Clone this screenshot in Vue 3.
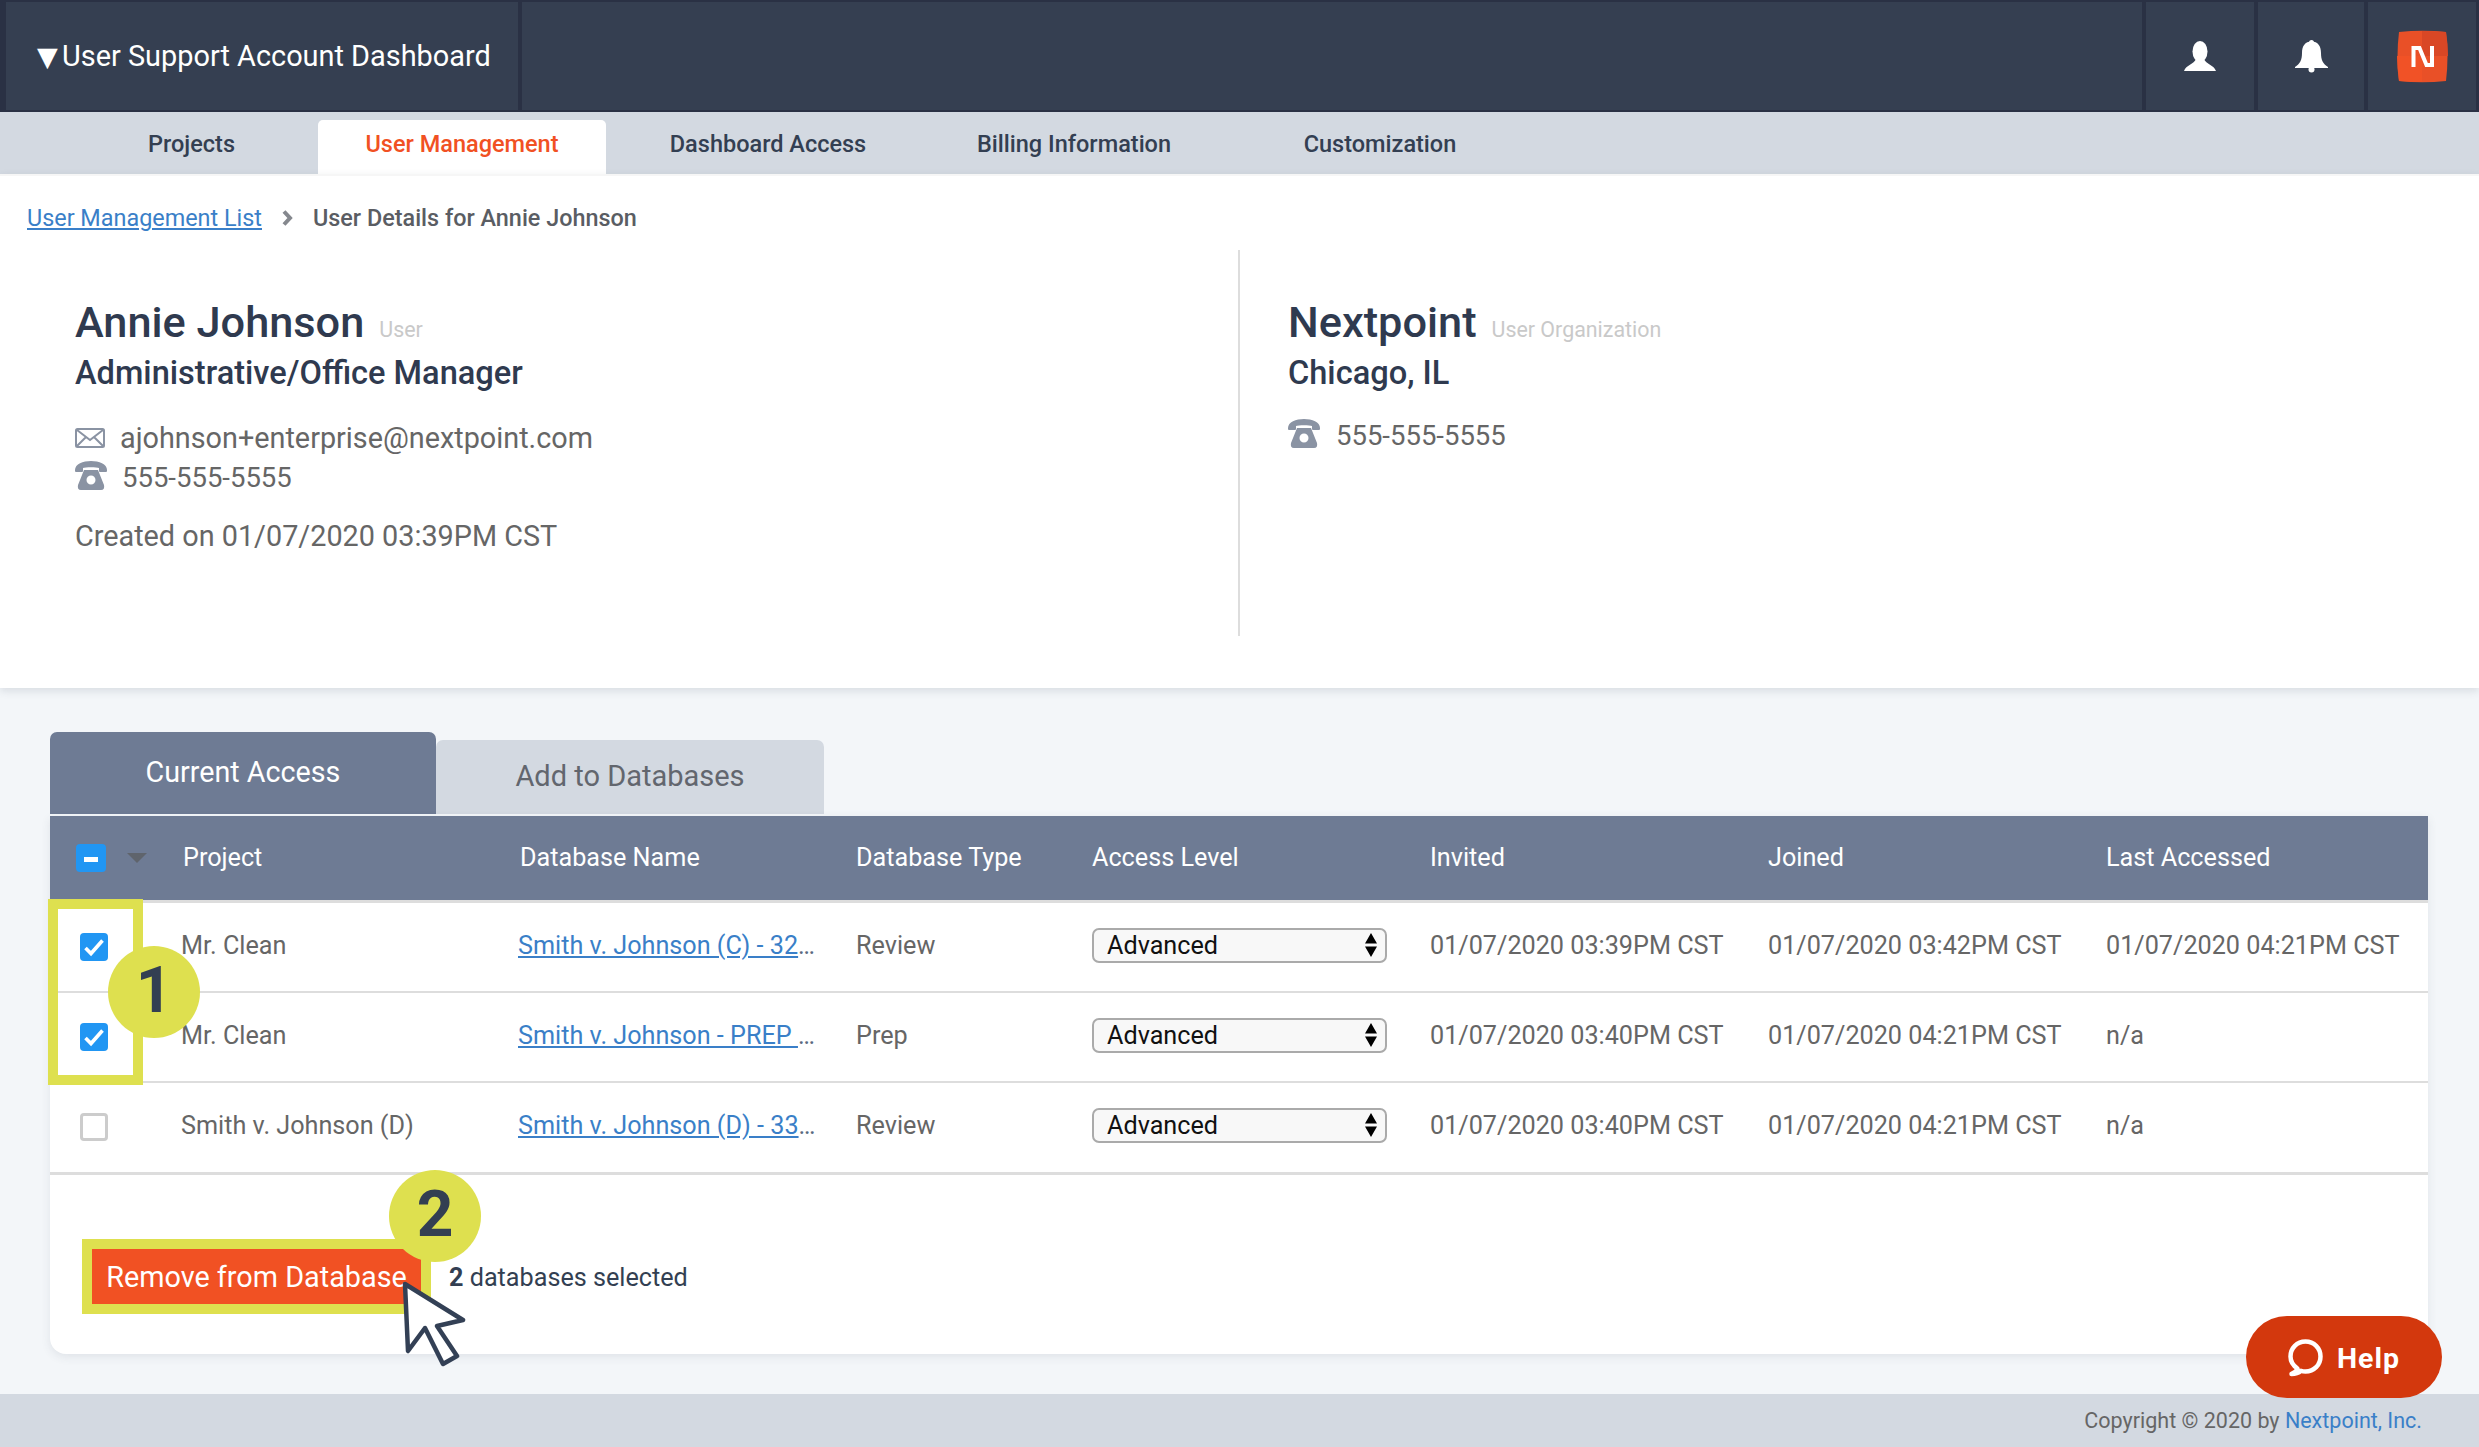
<template>
  <div class="page">
    <header class="topbar">
      <div class="topbar-title"><span class="caret">▼</span>User Support Account Dashboard</div>
      <div class="topbar-spacer"></div>
      <button class="topbar-btn">
        <svg width="32" height="30" viewBox="0 0 32 30" fill="#fff">
          <ellipse cx="16" cy="10.500" rx="7.500" ry="10.500" />
          <path d="M0 30C2 24 10 23 12 18h8c2 5 10 6 12 12z" />
        </svg>
      </button>
      <button class="topbar-btn bell-btn">
        <svg width="33" height="33" viewBox="0 0 33 33" fill="#fff">
          <circle cx="16.500" cy="2.500" r="2.500" />
          <path d="M16.500 1.500C23 1.500 26 6 26 13c0 7 2 11 7 14v1H0v-1c5-3 7-7 7-14C7 6 10 1.500 16.500 1.500z" />
          <circle cx="16.500" cy="29.500" r="3" />
        </svg>
      </button>
      <button class="topbar-btn">
        <svg width="53" height="53" viewBox="0 0 53 53">
          <path d="M3 2Q26.500-.5 50 2Q53 26.500 50 51Q26.500 53.500 3 51Q0 26.500 3 2z" fill="#e95027" />
          <path d="M26 1Q38 1 50 2Q52 14 52 26H26z" fill="#d94725" />
          <path d="M1 26H26V52Q14 52 3 51Q1 38 1 26z" fill="#f15226" />
          <path d="M17.500 37V18H23.500L30.500 35H36V16" fill="none" stroke="#fff" stroke-width="4" />
        </svg>
      </button>
    </header>

    <nav class="mainnav">
      <a
        v-for="tab in navTabs"
        :key="tab.label"
        class="nav-cell"
        :class="{ narrow: tab.narrow }"
      >
        <span class="nav-label" :class="{ active: tab.active }">{{ tab.label }}</span>
      </a>
    </nav>

    <section class="details">
      <div class="breadcrumb">
        <a class="link">User Management List</a>
        <svg width="11" height="16" viewBox="0 0 11 16" class="crumb-arrow">
          <path d="M2 1.500L8 8L2 14.500" fill="none" stroke="#85888e" stroke-width="4" />
        </svg>
        <span class="crumb-current">User Details for Annie Johnson</span>
      </div>

      <div class="detail-cols">
        <div class="detail-col user-col">
          <div class="name-row">
            <h1 class="name">Annie Johnson</h1>
            <span class="name-tag">User</span>
          </div>
          <h2 class="subtitle">Administrative/Office Manager</h2>
          <div class="email-row">
            <svg width="30" height="20" viewBox="0 0 30 20" fill="none" stroke="#8a93a3" stroke-width="2">
              <rect x="1" y="1" width="28" height="18" rx="1.500" />
              <path d="M2 2L15 12L28 2M2 18L11 9M28 18L19 9" />
            </svg>
            <span>ajohnson+enterprise@nextpoint.com</span>
          </div>
          <div class="phone-row">
            <svg class="phone-icon" width="32" height="29" viewBox="0 0 32 29" fill="#8a93a3" fill-rule="evenodd">
              <path d="M0 9C0 3 8 0 16 0s16 3 16 9v1q0 1-1 1h-6q-1 0-1-1V7C22 6 10 6 8 7v3q0 1-1 1H1q-1 0-1-1z" />
              <path d="M9 9h14l6 15q1 5-3 5H6q-4 0-3-5zM16 14.500a4.500 4.500 0 1 0 0 9a4.500 4.500 0 1 0 0-9z" />
            </svg>
            <span>555-555-5555</span>
          </div>
          <p class="created">Created on 01/07/2020 03:39PM CST</p>
        </div>

        <div class="detail-col org-col">
          <div class="name-row">
            <h1 class="name">Nextpoint</h1>
            <span class="name-tag">User Organization</span>
          </div>
          <h2 class="subtitle">Chicago, IL</h2>
          <div class="phone-row org-phone">
            <svg class="phone-icon" width="32" height="29" viewBox="0 0 32 29" fill="#8a93a3" fill-rule="evenodd">
              <path d="M0 9C0 3 8 0 16 0s16 3 16 9v1q0 1-1 1h-6q-1 0-1-1V7C22 6 10 6 8 7v3q0 1-1 1H1q-1 0-1-1z" />
              <path d="M9 9h14l6 15q1 5-3 5H6q-4 0-3-5zM16 14.500a4.500 4.500 0 1 0 0 9a4.500 4.500 0 1 0 0-9z" />
            </svg>
            <span>555-555-5555</span>
          </div>
        </div>
      </div>
    </section>

    <div class="access-tabs">
      <div class="access-tab current">Current Access</div>
      <div class="access-tab other">Add to Databases</div>
    </div>

    <section class="card">
      <div class="table-row table-head">
        <div class="head-check">
          <span class="checkbox minus"><i></i></span>
          <span class="head-caret"></span>
        </div>
        <div v-for="col in columns" :key="col">{{ col }}</div>
      </div>

      <div v-for="row in rows" :key="row.name" class="table-row body-row">
        <div class="check-cell">
          <span class="checkbox" :class="row.checked ? 'on' : 'off'">
            <svg v-if="row.checked" width="28" height="28" viewBox="0 0 28 28">
              <path d="M5.500 15L11 20.500L22.500 7.500" fill="none" stroke="#fff" stroke-width="3.600" />
            </svg>
          </span>
        </div>
        <div class="cell-shift">{{ row.project }}</div>
        <div class="cell-shift"><div class="db-link"><a class="link">{{ row.name }}</a></div></div>
        <div>{{ row.type }}</div>
        <div class="select-wrap">
          <select class="access-select">
            <option>Advanced</option>
            <option>Standard</option>
          </select>
          <svg width="12" height="24" viewBox="0 0 12 24" class="select-arrows">
            <path d="M6 0L12 10.500H0zM6 24L0 13.500H12z" fill="#000" />
          </svg>
        </div>
        <div>{{ row.invited }}</div>
        <div>{{ row.joined }}</div>
        <div>{{ row.accessed }}</div>
      </div>

      <div class="card-footer">
        <button class="remove-btn">Remove from Database</button>
        <span class="selected-count"><b>2</b> databases selected</span>
      </div>

      <div class="highlight-box"></div>
      <div class="step step-one">1</div>
      <div class="step step-two">2</div>
      <svg class="cursor" width="64" height="86" viewBox="0 0 64 86">
        <path d="M3 3L61 39L35 45L55 75L41 83L23 47L6 70z" fill="#fff" stroke="#334055" stroke-width="4.500" stroke-linejoin="round" />
      </svg>
    </section>

    <footer class="footer">
      Copyright © 2020 by&nbsp;<a class="footer-link">Nextpoint, Inc.</a>
    </footer>

    <button class="help-btn">
      <svg width="36" height="38" viewBox="0 0 36 38" fill="none">
        <path d="M9.500 29.500C5 26.500 2.500 22 2.500 17.500C2.500 9 9 2.500 17.500 2.500S32.500 9 32.500 17.500S26 32.500 17.500 32.500C16 32.500 14.500 32.300 13 31.800C10.500 34 7 35 3.500 35C6.500 34 8.500 32 9.500 29.500z" stroke="#fff" stroke-width="4.500" stroke-linejoin="round" />
      </svg>
      <span>Help</span>
    </button>
  </div>
</template>

<script setup>
const navTabs = [
  { label: "Projects", narrow: true },
  { label: "User Management", active: true },
  { label: "Dashboard Access" },
  { label: "Billing Information" },
  { label: "Customization" },
]

const columns = [
  "Project",
  "Database Name",
  "Database Type",
  "Access Level",
  "Invited",
  "Joined",
  "Last Accessed",
]

const rows = [
  {
    checked: true,
    project: "Mr. Clean",
    name: "Smith v. Johnson (C) - 3214 Review",
    type: "Review",
    invited: "01/07/2020 03:39PM CST",
    joined: "01/07/2020 03:42PM CST",
    accessed: "01/07/2020 04:21PM CST",
  },
  {
    checked: true,
    project: "Mr. Clean",
    name: "Smith v. Johnson - PREP Database",
    type: "Prep",
    invited: "01/07/2020 03:40PM CST",
    joined: "01/07/2020 04:21PM CST",
    accessed: "n/a",
  },
  {
    checked: false,
    project: "Smith v. Johnson (D)",
    name: "Smith v. Johnson (D) - 3316 Review",
    type: "Review",
    invited: "01/07/2020 03:40PM CST",
    joined: "01/07/2020 04:21PM CST",
    accessed: "n/a",
  },
]
</script>

<style>
html,
body {
  margin: 0;
  background: #f3f6f9;
}
</style>

<style scoped>
.page {
  position: relative;
  display: flex;
  flex-direction: column;
  height: 1447px;
  overflow: hidden;
  font-family: Roboto, "Liberation Sans", sans-serif;
  background: #f3f6f9;
  color: #666;
}

.topbar {
  display: flex;
  height: 112px;
  box-sizing: border-box;
  background: #2a3144;
  padding: 2px 3px 2px 6px;
  gap: 4px;
}

.topbar-title {
  width: 512px;
  background: #353f51;
  display: flex;
  align-items: center;
  padding-left: 31px;
  box-sizing: border-box;
  color: #fff;
  font-size: 28.900px;
  white-space: nowrap;
}

.caret {
  width: 25px;
  font-size: 27px;
  line-height: 1;
  font-family: "DejaVu Sans", sans-serif;
}

.topbar-spacer {
  flex: 1;
  background: #353f51;
}

.topbar-btn {
  width: 108px;
  border: 0;
  padding: 0;
  background: #353f51;
  display: flex;
  align-items: center;
  justify-content: center;
}

.bell-btn {
  width: 106px;
}

.mainnav {
  display: flex;
  height: 62px;
  padding-left: 74px;
  background: #d3d9e1;
}

.nav-cell {
  width: 306px;
  display: flex;
  justify-content: center;
  align-items: flex-end;
}

.nav-cell.narrow {
  width: 235px;
}

.nav-label {
  height: 54px;
  line-height: 49px;
  padding: 0 47px;
  font-size: 23.500px;
  font-weight: 500;
  color: #333f52;
  white-space: nowrap;
  border-radius: 5px 5px 0 0;
}

.nav-label.active {
  background: #fff;
  color: #f15123;
}

.details {
  height: 514px;
  box-sizing: border-box;
  background: #fff;
  border-top: 2px solid #f6f6f6;
  box-shadow: 0 3px 8px rgba(60, 70, 90, 0.14);
  position: relative;
}

.breadcrumb {
  display: flex;
  align-items: center;
  padding: 28px 0 0 27px;
  height: 28px;
  font-size: 23.400px;
}

.link {
  color: #3a7fc8;
  text-decoration: underline;
  text-underline-offset: 2px;
}

.crumb-arrow {
  margin: 0 20px 0 20px;
}

.crumb-current {
  font-weight: 500;
  color: #5a5d63;
}

.detail-cols {
  display: flex;
  margin-top: 18px;
  height: 386px;
}

.detail-col {
  box-sizing: border-box;
  padding-top: 48px;
}

.user-col {
  width: 1240px;
  padding-left: 75px;
  border-right: 2px solid #ddd;
}

.org-col {
  padding-left: 48px;
}

.name-row {
  display: flex;
  align-items: baseline;
  height: 50px;
}

.name {
  margin: 0;
  font-size: 43.300px;
  line-height: 50px;
  font-weight: 500;
  color: #2f3a4f;
}

.name-tag {
  margin-left: 15px;
  font-size: 21.400px;
  color: #c9c9c9;
}

.subtitle {
  margin: 4px 0 0;
  font-size: 32.600px;
  line-height: 42px;
  font-weight: 500;
  color: #2f3a4f;
}

.email-row,
.phone-row {
  display: flex;
  align-items: center;
  font-size: 28.800px;
  color: #666;
}

.email-row {
  margin-top: 24px;
  height: 40px;
  gap: 15px;
}

.phone-row {
  height: 38px;
  font-size: 27.500px;
  gap: 15px;
}

.phone-icon {
  margin-top: -4px;
}

.org-phone {
  margin-top: 22px;
  gap: 16px;
}

.created {
  margin: 21px 0 0;
  font-size: 28.800px;
  line-height: 38px;
}

.access-tabs {
  display: flex;
  align-items: flex-end;
  margin: 44px 0 0 50px;
  height: 82px;
}

.access-tab {
  box-sizing: border-box;
  text-align: center;
  border-radius: 7px 7px 0 0;
}

.access-tab.current {
  width: 386px;
  height: 82px;
  line-height: 81px;
  background: #6e7b94;
  color: #fff;
  font-size: 28.700px;
}

.access-tab.other {
  width: 388px;
  height: 74px;
  line-height: 73px;
  background: #d3d9e1;
  color: #62666e;
  font-size: 29px;
}

.card {
  position: relative;
  margin: 2px 51px 0 50px;
  height: 538px;
  background: #fff;
  border-radius: 0 0 16px 16px;
  box-shadow: 0 3px 10px rgba(60, 70, 90, 0.1);
}

.table-row {
  display: grid;
  grid-template-columns: 133px 337px 336px 236px 338px 338px 338px 1fr;
  align-items: center;
  font-size: 25.200px;
  white-space: nowrap;
}

.table-head {
  height: 82px;
  padding-bottom: 2px;
  background: #6e7b94;
  color: #fff;
  border-bottom: 3px solid #ddd;
  box-sizing: content-box;
}

.head-check {
  display: flex;
  align-items: center;
  padding-left: 26px;
  padding-top: 2px;
}

.head-caret {
  margin-left: 21px;
  width: 0;
  height: 0;
  border-left: 10px solid transparent;
  border-right: 10px solid transparent;
  border-top: 10px solid #5f646c;
}

.body-row {
  height: 85px;
  padding-bottom: 3px;
  border-bottom: 2px solid #ddd;
  color: #666;
}

.body-row:nth-child(4) {
  height: 85px;
  padding-bottom: 4px;
  border-bottom-width: 3px;
}

.check-cell {
  padding-left: 30px;
  padding-top: 3px;
}

.cell-shift {
  margin-left: -2px;
}

.checkbox {
  display: block;
  width: 28px;
  height: 28px;
  border-radius: 4px;
  box-sizing: border-box;
}

.checkbox svg {
  display: block;
}

.checkbox.on {
  background: #2196f3;
}

.checkbox.off {
  border: 3px solid #ccc;
  background: #fff;
}

.checkbox.minus {
  width: 30px;
  background: #2196f3;
  display: flex;
  align-items: center;
  justify-content: center;
}

.checkbox.minus i {
  width: 14px;
  height: 5px;
  background: #fff;
  margin-top: 2px;
}

.db-link {
  width: 300px;
  overflow: hidden;
  text-overflow: ellipsis;
  color: #5a6a80;
}

.select-wrap {
  position: relative;
  width: 295px;
}

.access-select {
  display: block;
  width: 100%;
  height: 35px;
  box-sizing: border-box;
  appearance: none;
  border: 2px solid #aaa;
  border-radius: 7px;
  background: #f8f8f8;
  padding: 0 0 0 13px;
  font-family: inherit;
  font-size: 25.200px;
  color: #111;
}

.select-arrows {
  position: absolute;
  right: 10px;
  top: 5px;
}

.card-footer {
  display: flex;
  align-items: center;
  padding: 64px 0 0 32px;
}

.remove-btn {
  box-sizing: content-box;
  width: 329px;
  height: 55px;
  border: 10px solid #dee04f;
  background: #f15123;
  color: #fff;
  padding: 0;
  font-family: inherit;
  font-size: 28.800px;
}

.selected-count {
  margin: 1px 0 0 18px;
  font-size: 25.200px;
  color: #333f52;
}

.selected-count b {
  font-weight: 700;
}

.highlight-box {
  position: absolute;
  left: -2px;
  top: 83px;
  width: 75px;
  height: 166px;
  border: 10px solid #dee04f;
}

.step {
  position: absolute;
  width: 92px;
  height: 92px;
  border-radius: 50%;
  background: #dee04f;
  color: #333f52;
  font-size: 64px;
  font-weight: 700;
  line-height: 90px;
  text-align: center;
}

.step-one {
  left: 58px;
  top: 130px;
}

.step-two {
  left: 339px;
  top: 354px;
}

.cursor {
  position: absolute;
  left: 352px;
  top: 465px;
}

.footer {
  margin-top: auto;
  height: 53px;
  box-sizing: border-box;
  background: #d3d9e1;
  display: flex;
  align-items: center;
  justify-content: flex-end;
  padding: 0 57px 0 0;
  font-size: 21.500px;
  color: #666;
}

.footer-link {
  color: #3a7fc8;
}

.help-btn {
  position: absolute;
  left: 2246px;
  top: 1316px;
  width: 196px;
  height: 82px;
  border: 0;
  border-radius: 41px;
  background: #d3380d;
  color: #fff;
  display: flex;
  align-items: center;
  justify-content: center;
  gap: 13px;
  padding: 2px 0 0;
  font-family: inherit;
  font-size: 28.500px;
  font-weight: 700;
  letter-spacing: 1px;
}
</style>
